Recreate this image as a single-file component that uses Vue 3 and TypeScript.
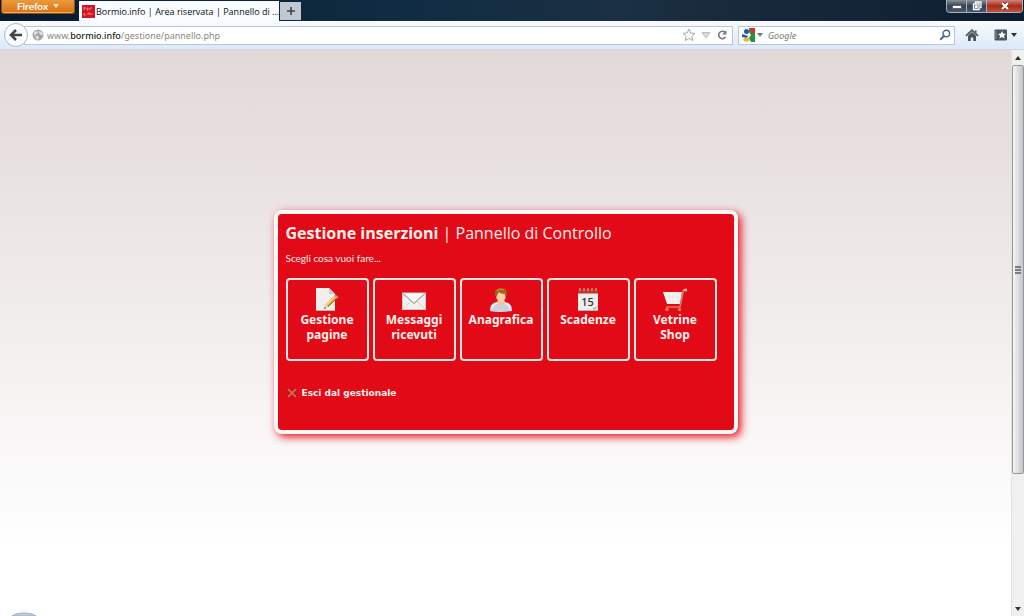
<script setup lang="ts">
import { ref } from 'vue'

type IconName = 'page' | 'mail' | 'person' | 'calendar' | 'cart'
interface Action {
  icon: IconName
  label: string
}

const actions: Action[] = [
  { icon: 'page', label: 'Gestione pagine' },
  { icon: 'mail', label: 'Messaggi ricevuti' },
  { icon: 'person', label: 'Anagrafica' },
  { icon: 'calendar', label: 'Scadenze' },
  { icon: 'cart', label: 'Vetrine Shop' },
]

const address = ref('www.bormio.info/gestione/pannello.php')
const query = ref('')
</script>

<template>
  <div class="window">
    <header class="titlebar">
      <button class="firefox" type="button">Firefox <i class="caret light"></i></button>
      <div class="tabs">
        <button class="tab" type="button">
          <svg class="favicon" viewBox="0 0 13 13" aria-hidden="true">
            <rect width="13" height="13" fill="#d71522" />
            <path d="M2 2v3M2 3h2M5 3v2h1V3zM8 5V3h2M2 8v2h2M6 10V8h2v2M10 8v2" fill="none" stroke="#f19a9a" stroke-width=".8" />
          </svg>
          <span class="tab-title">Bormio.info | Area riservata | Pannello di ...</span>
        </button>
        <button class="new-tab" type="button" aria-label="Nuova scheda">
          <svg viewBox="0 0 10 10" width="10" height="10"><path d="M5 1v8M1 5h8" stroke="#3d454f" stroke-width="1.600" /></svg>
        </button>
      </div>
      <div class="window-buttons">
        <button type="button" aria-label="Riduci a icona">
          <svg viewBox="0 0 12 10" width="12" height="10"><rect x="1.500" y="4.500" width="9" height="3" fill="#fff" stroke="#444b55" stroke-width=".7" /></svg>
        </button>
        <button type="button" aria-label="Ripristina">
          <svg viewBox="0 0 12 10" width="12" height="10"><path d="M4.500 2V1H10v5.500H9M2.500 3H8v5.500H2.500zM4.500 5h1.500v1.500H4.500z" fill="none" stroke="#fff" stroke-width="1.300" /></svg>
        </button>
        <button class="close" type="button" aria-label="Chiudi">
          <svg viewBox="0 0 12 10" width="12" height="10"><path d="M3 2l6 6M9 2L3 8" stroke="#6d2018" stroke-width="3.400" /><path d="M3 2l6 6M9 2L3 8" stroke="#fff" stroke-width="2.200" /></svg>
        </button>
      </div>
    </header>

    <nav class="toolbar">
      <button class="back" type="button" aria-label="Indietro">
        <svg viewBox="0 0 14 12" width="14" height="12"><path d="M7 1L2 6l5 5M2.500 6H13" fill="none" stroke="#3e4650" stroke-width="2.600" /></svg>
      </button>
      <div class="address">
        <svg class="globe" viewBox="0 0 12 12" width="12" height="12" aria-hidden="true">
          <circle cx="6" cy="6" r="5.500" fill="#a5a7ab" />
          <path d="M2 3l3-1 1 1-1 2-2 1-1-1zM7 2l3 1 1 3-2 0-2-2zM3 7l3 0 1 2-2 2-1-2z" fill="#dfe1e4" />
        </svg>
        <div class="url">
          <input v-model="address" class="url-input" type="text" aria-label="Indirizzo" />
          <span class="url-text" aria-hidden="true">www.<b>bormio.info</b>/gestione/pannello.php</span>
        </div>
        <button class="plain" type="button" aria-label="Segnalibro">
          <svg viewBox="0 0 14 14" width="14" height="14"><path d="M7 1l1.800 4 4.200.400-3.200 2.900 1 4.300L7 10.300l-3.800 2.300 1-4.300L1 5.400 5.200 5z" fill="#fdfdfd" stroke="#a6a9ae" /></svg>
        </button>
        <button class="plain" type="button" aria-label="Cronologia">
          <svg viewBox="0 0 10 8" width="10" height="8"><path d="M1 1.500h8L5 7z" fill="#d7d9dc" stroke="#b0b3b7" stroke-width=".8" /></svg>
        </button>
        <button class="plain" type="button" aria-label="Ricarica">
          <svg viewBox="0 0 12 12" width="12" height="12"><path d="M9 3.300A3.700 3.700 0 1 0 9.500 8" fill="none" stroke="#777d85" stroke-width="1.600" /><path d="M10.500 1v4.500H6z" fill="#777d85" /></svg>
        </button>
      </div>
      <div class="search">
        <button class="plain engine" type="button" aria-label="Motore di ricerca">
          <svg viewBox="0 0 14 14" width="14" height="14">
            <rect width="14" height="14" fill="#f7f9fb" />
            <path d="M7 0h6v14H9l-2-4 2-3-2-3z" fill="#23943d" />
            <path d="M8 0h5v5H9z" fill="#dc3022" />
            <circle cx="4.500" cy="3.500" r="2.500" fill="#2757ab" />
            <path d="M0 6l6 2-1 2-5-1z" fill="#2757ab" />
            <ellipse cx="4.500" cy="11.500" rx="3" ry="2" fill="#efb52b" />
          </svg>
          <i class="caret gray"></i>
        </button>
        <input v-model="query" class="search-input" type="text" placeholder="Google" aria-label="Cerca con Google" />
        <button class="plain" type="button" aria-label="Cerca">
          <svg viewBox="0 0 12 12" width="12" height="12"><circle cx="7.300" cy="4.500" r="3.300" fill="none" stroke="#47698f" stroke-width="1.400" /><path d="M5 7L1.200 10.800" stroke="#47698f" stroke-width="2" /></svg>
        </button>
      </div>
      <button class="plain home" type="button" aria-label="Pagina iniziale">
        <svg viewBox="0 0 14 12" width="14" height="12"><path d="M1 6.800L7 1.200l6 5.600" fill="none" stroke="#4b545e" stroke-width="1.700" /><path d="M3 6.800L7 3l4 3.800V12H8.200V8.500H5.800V12H3zM10 1.500h1.500V4L10 3z" fill="#4b545e" /></svg>
      </button>
      <button class="plain bookmarks" type="button" aria-label="Segnalibri">
        <svg viewBox="0 0 14 12" width="14" height="12"><rect x=".5" y=".5" width="12.500" height="11" rx="1" fill="#4b545e" /><path d="M2 2v8" stroke="#8b949d" /><path d="M8 2l1.200 2.600 2.800.300-2.100 1.800.700 2.900L8 8.100 5.400 9.600l.700-2.900L4 4.900l2.800-.3z" fill="#fff" /></svg>
        <i class="caret dark"></i>
      </button>
    </nav>

    <div class="viewport">
      <main class="page">
        <section class="panel">
          <h1><b>Gestione inserzioni</b> | Pannello di Controllo</h1>
          <p>Scegli cosa vuoi fare...</p>
          <div class="tiles">
            <a v-for="action in actions" :key="action.icon" class="tile" href="#">
              <svg class="tile-icon" viewBox="0 0 24 24" aria-hidden="true">
                <g v-if="action.icon === 'page'">
                  <path d="M1 0h13l6 6v17H1z" fill="#f1efee" />
                  <path d="M14 0v6h6z" fill="#c9c9c9" />
                  <path d="M1 22.500h19" stroke="#bdb4b2" />
                  <path d="M9 21l2-5L20 7l3 2.500L13 19z" fill="#e4a33a" />
                  <path d="M11.500 17L20.500 8" stroke="#f8dc8c" stroke-width="1.300" />
                  <path d="M13 18.500L22 10" stroke="#8d6326" />
                  <path d="M9 21l2-5 2 3z" fill="#eadbc3" />
                  <path d="M9 21l1-2 1 1z" fill="#333" />
                  <path d="M19 8l1.500-1.500 3 2.500-1.500 1.500z" fill="#cb8f91" />
                </g>
                <g v-else-if="action.icon === 'mail'">
                  <rect x=".5" y="5" width="23" height="16.500" fill="#f0f0ee" stroke="#c8cbc7" />
                  <path d="M1 21l8-8M23 21l-8-8" stroke="#d3d5d2" />
                  <path d="M1 5.500l11 10 11-10" fill="#fafafa" stroke="#a9aeaa" stroke-width="1.200" />
                </g>
                <g v-else-if="action.icon === 'person'">
                  <path d="M1 23c0-6 2-8 7-9h8c5 1 7 3 7 9-6 1.300-16 1.300-22 0z" fill="#cbd0e2" />
                  <path d="M3 21c0-4 2-5 5-6M21 21c0-4-2-5-5-6" fill="none" stroke="#eff0f7" stroke-width="1.500" />
                  <path d="M8 14l4 5 4-5-1.500-3h-5z" fill="#f5c799" />
                  <ellipse cx="12" cy="7.500" rx="5" ry="6.500" fill="#f9d1a7" />
                  <path d="M6.500 8C4.500 2 8 0 12 0c5 0 7 3 5.500 8.500L16 9V6c-3 0-5-1-6-2-1 2-2 2-2 5z" fill="#a5621d" />
                  <path d="M8 3c2-2 5-2 7-1" fill="none" stroke="#d39443" />
                </g>
                <g v-else-if="action.icon === 'calendar'">
                  <rect x="2" y="2" width="20" height="21" fill="#eeeeec" />
                  <rect x="2" y="1.500" width="20" height="4" fill="#bd392b" />
                  <path d="M4 0v3M8 0v3M12 0v3M16 0v3M20 0v3" stroke="#d8a48f" stroke-width="1.200" />
                  <path d="M2 22.500h20" stroke="#b8b7b5" />
                  <path d="M16 23c2-1 1-3 1-4 2 1 4 0 5-2v2l-5 4z" fill="#b9bbba" />
                  <text x="11.500" y="17.500" text-anchor="middle" class="day">15</text>
                </g>
                <g v-else>
                  <path d="M0 4h19l-2 12H4z" fill="#f6f2ee" />
                  <path d="M5 5l2 10M10 5v10M15 5l-1 10M2 9h16" stroke="#e9e0dc" stroke-width=".6" />
                  <path d="M24 2h-3.500L17 19H3" fill="none" stroke="#dc7961" stroke-width="1.600" />
                  <path d="M21 2h3" stroke="#efc0a6" stroke-width="2.500" />
                  <circle cx="4" cy="21.500" r="1.800" fill="#e57858" />
                  <circle cx="16.500" cy="21.500" r="1.800" fill="#e57858" />
                </g>
              </svg>
              <span>{{ action.label }}</span>
            </a>
          </div>
          <a class="exit" href="#">
            <svg viewBox="0 0 12 12" width="12" height="12" aria-hidden="true"><path d="M2 2l8 8M10 2l-8 8" stroke="#a31a19" stroke-width="4" /><path d="M2 2l8 8M10 2l-8 8" stroke="#e8584e" stroke-width="2.200" /></svg>
            Esci dal gestionale
          </a>
        </section>
        <svg class="orb" viewBox="0 0 26 4" aria-hidden="true"><path d="M1 4C6 0 20 0 25 4z" fill="#c2cdda" stroke="#9eadbd" /></svg>
      </main>
      <div class="scrollbar">
        <button type="button" aria-label="Scorri su"><i class="caret dark up"></i></button>
        <div class="track">
          <div class="thumb"><i></i><i></i><i></i></div>
        </div>
        <button type="button" aria-label="Scorri giù"><i class="caret dark"></i></button>
      </div>
    </div>
  </div>
</template>

<style>
body {
  margin: 0;
}
</style>

<style scoped>
* {
  box-sizing: border-box;
}
.window {
  display: flex;
  flex-direction: column;
  height: 100vh;
  overflow: hidden;
  font-family: 'Noto Sans', sans-serif;
  font-size: 9px;
}
button {
  margin: 0;
  padding: 0;
  border: 0;
  background: none;
  font: inherit;
}
svg {
  display: block;
  flex: none;
}
.titlebar {
  display: flex;
  flex: none;
  align-items: flex-start;
  height: 21px;
  background: linear-gradient(90deg, #091a2d, #102c43 40%, #1b3042 60%, #0d1d30);
}
.firefox {
  display: flex;
  align-items: center;
  justify-content: center;
  gap: 5px;
  width: 74px;
  height: 14px;
  margin-left: 1px;
  padding-bottom: 1px;
  border: 1px solid #8f5214;
  border-top: 0;
  border-radius: 0 0 3px 3px;
  background: linear-gradient(#ec9a3e, #da7110);
  box-shadow: inset 0 -1px #efb067;
  color: #fff;
  font-family: Lato, sans-serif;
  font-size: 10px;
  font-weight: 700;
}
.caret {
  display: block;
  border: 3px solid transparent;
  border-top: 4px solid;
  border-bottom: 0;
}
.light {
  color: #fbe3bd;
}
.gray {
  color: #777;
}
.dark {
  color: #333;
}
.up {
  transform: rotate(180deg);
}
.tabs {
  display: flex;
  flex: 1;
  align-items: flex-start;
  gap: 1px;
  padding-left: 4px;
}
.tab {
  display: flex;
  align-items: center;
  gap: 1px;
  width: 200px;
  height: 20px;
  margin-top: 1px;
  padding-left: 3px;
  padding-top: 1px;
  background: #f8fbff;
  color: #111;
  font-family: 'Open Sans', 'Noto Sans', sans-serif;
  white-space: nowrap;
}
.favicon {
  width: 13px;
  height: 13px;
}
.new-tab {
  display: grid;
  place-items: center;
  width: 21px;
  height: 18px;
  margin-top: 2px;
  background: #c0c9d3;
}
.window-buttons {
  display: flex;
  height: 13px;
  margin-right: 1px;
  border: 1px solid #a7b1bd;
  border-top: 0;
  border-radius: 0 0 4px 4px;
  overflow: hidden;
}
.window-buttons button {
  display: grid;
  place-items: center;
  width: 20px;
  border-right: 1px solid #a7b1bd;
  background: linear-gradient(#8792a0, #343f4f 50%, #4b596b);
}
.window-buttons .close {
  width: 35px;
  border: 0;
  background: linear-gradient(#cf8378, #a92a1a 50%, #c4553c);
}
.toolbar {
  display: flex;
  flex: none;
  align-items: center;
  height: 29px;
  padding: 0 7px 0 4px;
  border-bottom: 1px solid #cdd5e1;
  background: linear-gradient(#f8fbff, #dce9f8);
}
.back {
  z-index: 1;
  display: grid;
  flex: none;
  place-items: center;
  width: 24px;
  height: 24px;
  border: 1px solid #adb8c6;
  border-radius: 50%;
  background: #fafcfe;
}
.address,
.search {
  display: flex;
  align-items: center;
  height: 19px;
  border: 1px solid #b9c6d6;
  background: #fff;
}
.address {
  flex: 1;
  gap: 5px;
  margin-left: -4px;
  padding: 0 4px 0 7px;
}
.url {
  position: relative;
  flex: 1;
  height: 17px;
  margin-left: -2px;
}
.url-input {
  width: 100%;
  height: 17px;
  padding: 0;
  border: 0;
  outline: 0;
  background: none;
  color: transparent;
  caret-color: #222;
  font: inherit;
}
.url-text {
  position: absolute;
  inset: 0;
  color: #888;
  line-height: 17px;
  pointer-events: none;
}
.url-text b {
  color: #222;
  font-weight: 500;
}
.plain {
  display: flex;
  flex: none;
  align-items: center;
}
.search {
  flex: none;
  width: 217px;
  margin-left: 5px;
  padding: 0 3px;
}
.engine {
  gap: 1px;
}
.search-input {
  flex: 1;
  min-width: 0;
  padding: 0 5px;
  border: 0;
  outline: 0;
  background: none;
  font: inherit;
}
.search-input::placeholder {
  color: #777;
  font-style: italic;
  opacity: 1;
}
.home {
  margin-left: 10px;
}
.bookmarks {
  gap: 3px;
  margin-left: 15px;
}
.viewport {
  display: flex;
  flex: 1;
  min-height: 0;
}
.page {
  position: relative;
  display: grid;
  flex: 1;
  place-items: center;
  padding-bottom: 22px;
  background: linear-gradient(#e2d8d8, #fff 88%);
}
.panel {
  min-height: 224px;
  padding: 8px 17px 30px 8px;
  border: 4px solid #fff8f5;
  border-radius: 8px;
  background: #e20a16;
  box-shadow: 3px 3px 8px #ea1220;
  color: #fff0ec;
}
h1 {
  margin: 0;
  font-family: 'Open Sans', 'Noto Sans', sans-serif;
  font-size: 16px;
  font-weight: 400;
  line-height: 22px;
}
p {
  margin: 7px 0 13px;
  font-family: Lato, 'Noto Sans', sans-serif;
  font-size: 10px;
  line-height: 14px;
}
.tiles {
  display: flex;
  gap: 4px;
}
.tile {
  display: flex;
  flex-direction: column;
  align-items: center;
  width: 83px;
  height: 83px;
  padding: 8px 4px;
  border: 2px solid #ffe7e2;
  border-radius: 4px;
  color: inherit;
  font-size: 12px;
  font-weight: 700;
  line-height: 15px;
  text-align: center;
  text-decoration: none;
}
.tile-icon {
  width: 24px;
  height: 24px;
}
.day {
  fill: #333;
  font-size: 11px;
  font-weight: 500;
}
.exit {
  display: flex;
  align-items: center;
  gap: 4px;
  width: fit-content;
  margin-top: 25px;
  color: inherit;
  font-family: 'DejaVu Sans', sans-serif;
  font-size: 9px;
  font-weight: 700;
  line-height: 14px;
  text-decoration: none;
}
.orb {
  position: absolute;
  bottom: 0;
  left: 11px;
  width: 26px;
  height: 4px;
}
.scrollbar {
  display: flex;
  flex: none;
  flex-direction: column;
  width: 13px;
  border-left: 1px solid #e2e2e2;
  background: #f0f0f0;
}
.scrollbar button {
  display: grid;
  flex: none;
  place-items: center;
  height: 15px;
}
.track {
  flex: 1;
}
.thumb {
  display: flex;
  flex-direction: column;
  align-items: center;
  justify-content: center;
  gap: 1px;
  height: calc(76% + 2px);
  border: 1px solid #969799;
  border-radius: 2px;
  background: linear-gradient(90deg, #f7f7f7, #dcdde0 50%, #c3c5ca);
}
.thumb i {
  width: 6px;
  height: 2px;
  background: #777b80;
}
</style>
